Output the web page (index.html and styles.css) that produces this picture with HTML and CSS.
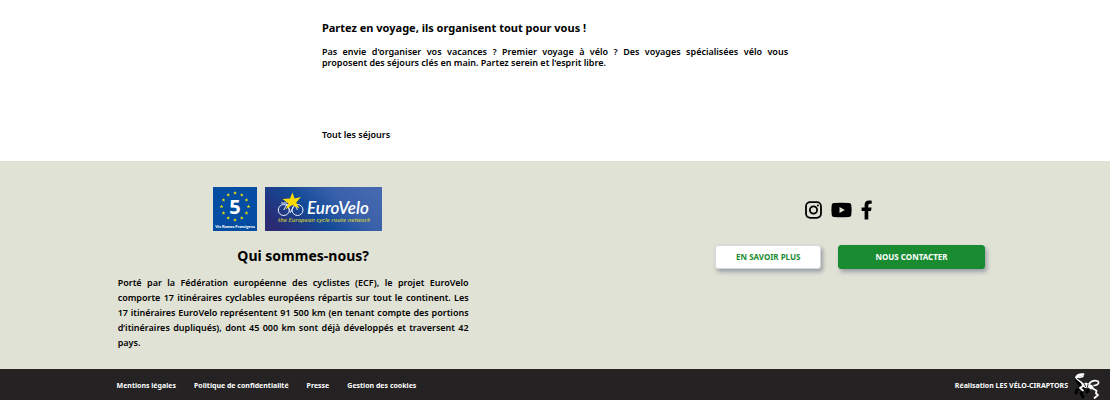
FILE: index.html
```html
<!DOCTYPE html>
<html lang="fr">
<head>
<meta charset="utf-8">
<meta name="viewport" content="width=device-width, initial-scale=1">
<title>EuroVelo 5</title>
<link rel="stylesheet" href="styles.css">
</head>
<body>
<main class="trips">
  <h2 class="trips-title">Partez en voyage, ils organisent tout pour vous !</h2>
  <p class="trips-text">Pas envie d'organiser vos vacances ? Premier voyage à vélo ? Des voyages spécialisées vélo vous proposent des séjours clés en main. Partez serein et l'esprit libre.</p>
  <a class="trips-link" href="#">Tout les séjours</a>
</main>
<footer>
  <div class="about">
    <section class="about-main">
      <div class="logos">
        <svg class="logo-route" viewBox="0 0 44 44" role="img" aria-label="EuroVelo 5 Via Romea Francigena">
          <defs><path id="star" d="M0-1.900L.5-.6 1.900-.6.8.3 1.200 1.600 0 .8-1.200 1.600-.8.3-1.900-.6-.5-.6Z"/></defs>
          <rect width="44" height="44" fill="#034ea2"/>
          <g fill="#ffe600">
            <use href="#star" x="22" y="6"/><use href="#star" x="28.800" y="8"/><use href="#star" x="33.500" y="13"/>
            <use href="#star" x="35.500" y="19.500"/><use href="#star" x="33.500" y="26"/><use href="#star" x="28.800" y="31"/>
            <use href="#star" x="22" y="33"/><use href="#star" x="15.200" y="31"/><use href="#star" x="10.500" y="26"/>
            <use href="#star" x="8.500" y="19.500"/><use href="#star" x="10.500" y="13"/><use href="#star" x="15.200" y="8"/>
          </g>
          <text class="route-number" x="22" y="27" text-anchor="middle">5</text>
          <text class="route-name" x="22" y="41" text-anchor="middle">Via Romea Francigena</text>
        </svg>
        <svg class="logo-eurovelo" viewBox="0 0 117 44" role="img" aria-label="EuroVelo, the European cycle route network">
          <defs><linearGradient id="sky" x1="0" y1=".7" x2="1" y2=".3">
            <stop offset="0" stop-color="#2b2a73"/><stop offset=".4" stop-color="#134a98"/><stop offset=".7" stop-color="#3960aa"/><stop offset="1" stop-color="#4568b0"/>
          </linearGradient></defs>
          <rect width="117" height="44" fill="url(#sky)"/>
          <g fill="none" stroke="#e9eef8" stroke-width="1">
            <circle cx="18.800" cy="23" r="5.500"/><circle cx="32.500" cy="23" r="5.500"/>
            <path d="M18.800 23L22 17M22 17L25.500 25.500 29 19M28.500 15L32.500 23M16 16H22"/>
          </g>
          <path d="M27.500 5.500L29.500 11.500 36 10 31.200 15.500 34.500 21.500 27.300 18 20.500 22.500 23.500 16.500 17.500 12 25 11.500Z" fill="#fddb00"/>
          <text class="brand-name" x="42" y="27">EuroVelo</text>
          <text class="brand-line" x="13" y="35">the European cycle route network</text>
        </svg>
      </div>
      <h2 class="about-title">Qui sommes-nous?</h2>
      <p class="about-text">Porté par la Fédération européenne des cyclistes (ECF), le projet EuroVelo comporte 17 itinéraires cyclables européens répartis sur tout le continent. Les 17 itinéraires EuroVelo représentent 91 500 km (en tenant compte des portions d’itinéraires dupliqués), dont 45 000 km sont déjà développés et traversent 42 pays.</p>
    </section>
    <section class="contact">
      <div class="socials">
        <a class="social" href="#" aria-label="Instagram"><svg width="17" height="18" viewBox="0 0 17 18" fill="none" stroke="#000" stroke-width="1.800"><rect x="1" y="1.200" width="15" height="15.600" rx="4.200"/><circle cx="8.500" cy="9" r="3.600"/><circle cx="12.900" cy="4.600" r="1" fill="#000" stroke="none"/></svg></a>
        <a class="social" href="#" aria-label="YouTube"><svg width="21" height="16" viewBox="0 0 21 16"><path fill-rule="evenodd" d="M3 1Q10.500.4 18 1 20.100 1.200 20.300 3 20.900 8 20.300 13 20.100 14.800 18 15 10.500 15.600 3 15 .9 14.800.7 13 .1 8 .7 3 .9 1.200 3 1ZM8.500 5V11L13.800 8Z"/></svg></a>
        <a class="social" href="#" aria-label="Facebook"><svg width="12" height="20" viewBox="0 0 12 20"><path d="M3.600 19.500V11H.6V7.500H3.600V4.900C3.600 2 5.300.5 8 .5 9.300.5 10.700.7 10.700.7V3.700H9.200C7.700 3.700 7.300 4.600 7.300 5.500V7.500H10.600L10 11H7.300V19.500Z"/></svg></a>
      </div>
      <div class="actions">
        <button class="button button-light" type="button">EN SAVOIR PLUS</button>
        <button class="button button-green" type="button">NOUS CONTACTER</button>
      </div>
    </section>
  </div>
  <div class="legal">
    <nav class="legal-links">
      <a href="#">Mentions légales</a>
      <a href="#">Politique de confidentialité</a>
      <a href="#">Presse</a>
      <a href="#">Gestion des cookies</a>
    </nav>
    <div class="credit">
      <a href="#">Réalisation LES VÉLO-CIRAPTORS</a>
      <svg class="raptor" width="28" height="28" viewBox="0 0 28 28" fill="none" stroke-linecap="round" stroke-linejoin="round" aria-hidden="true">
        <path d="M2.500 8L5 12 9 15 3 18 2 21M10 17L7 21 9 25M14 18L13 20" stroke="#000" stroke-width="3"/>
        <path d="M1 5.500C2 2 6 .5 10.500 1.500L10 3.500 6 4.500 3 6.500Z" fill="#fff"/>
        <path d="M2 5.500C2 8 6 8.500 8.500 11.500M5 5.500L9 4.500" stroke="#fff" stroke-width="1.300"/>
        <path d="M7 10.500L10 11.500 12 10.500 15 12 18 13 20 16 17 17.500 14 15.500 11 16 8 14Z" fill="#fff"/>
        <path d="M15 12C17 9 20 8 23.500 9 26 10.500 24 13.500 20 13.500" stroke="#fff" stroke-width="1.600"/>
        <path d="M9 14L6 16 9 18.500M17.500 16L22.500 18.500 22 21.500 24 23 20.500 26" stroke="#fff" stroke-width="1.800"/>
        <path d="M10.500 12L11.500 14.500M14 12.500L13.500 15" stroke="#242223" stroke-width="1"/>
      </svg>
    </div>
  </div>
</footer>
</body>
</html>
```
FILE: styles.css
```css
* { box-sizing: border-box; }
body {
  margin: 0;
  background: #fff;
  color: #000;
  font: 600 9px/11px "Noto Sans", "Open Sans", sans-serif;
}
h2, p { margin: 0; }
a { color: inherit; text-decoration: none; }
svg { display: block; }

.trips { width: 42%; margin: 0 auto; padding: 20px 0; }
.trips-title { margin-bottom: 10px; font-size: 11px; line-height: 16px; }
.trips-text { margin-bottom: 61px; text-align: justify; }
.trips-link { display: block; line-height: 12px; }

.about {
  display: flex;
  justify-content: space-between;
  padding: 26px 11.300% 19px 10.600%;
  background: #e0e2d5;
}
.about-main { flex: 0 1 351px; }
.logos { display: flex; justify-content: center; gap: 8px; margin-bottom: 12px; padding-left: 8px; }
.logo-route { width: 44px; height: 44px; }
.logo-eurovelo { width: 117px; height: 44px; }
.route-number { fill: #fff; font: 700 20px "Open Sans", sans-serif; }
.route-name { fill: #fff; font: 900 4px Lato, sans-serif; }
.brand-name { fill: #fff; font: italic 600 17px Lato, sans-serif; }
.brand-line { fill: #c3c43c; font: italic 600 6px "Open Sans", sans-serif; }
.about-title { margin-bottom: 7px; padding-left: 20px; font-size: 14px; line-height: 25px; text-align: center; }
.about-text { line-height: 15px; text-align: justify; }

.contact { flex: 0 1 292px; padding-top: 13px; }
.socials { display: flex; align-items: center; justify-content: center; gap: 9px; margin-bottom: 25px; }
.actions { display: flex; justify-content: flex-end; gap: 17px; }
.button {
  height: 24px;
  padding: 0 20px;
  border: 1px solid #d4d8dc;
  border-radius: 3px;
  box-shadow: 2px 3px 4px #9a9ea5;
  font: 700 8px/12px "Noto Sans", "Open Sans", sans-serif;
}
.button-light { background: #fff; color: #1a8c32; }
.button-green { padding: 0 36px; border-color: #198c32; background: #198c32; color: #fff; }

.legal {
  display: flex;
  align-items: center;
  justify-content: space-between;
  min-height: 31px;
  padding: 2px 8px 0 10.500%;
  background: #242223;
  color: #fff;
  font-size: 7px;
  font-weight: 700;
}
.legal-links { display: flex; gap: 18px; }
.credit { display: flex; align-items: center; gap: 6px; }
```
